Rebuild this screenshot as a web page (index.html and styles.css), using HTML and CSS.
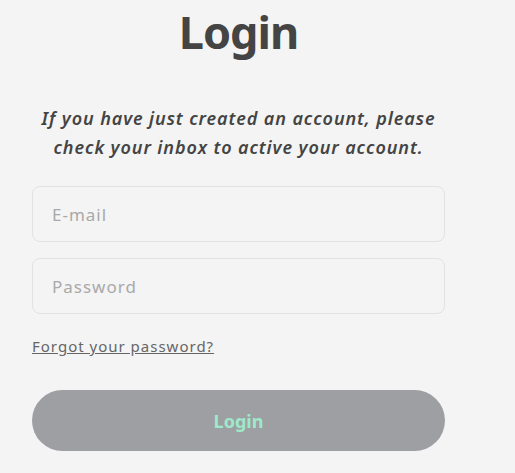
FILE: index.html
```html
<!DOCTYPE html>
<html lang="en">
<head>
    <meta charset="UTF-8">
    <meta name="viewport" content="width=device-width, initial-scale=1.0">
    <title>Login</title>
    <link rel="stylesheet" href="styles.css">
</head>
<body>
    <div class="login-box">
        <h1 class="title">Login</h1>
        <p class="notice">If you have just created an account, please check your inbox to active your account.</p>
        <form class="login-form">
            <input type="text" class="field" placeholder="E-mail">
            <input type="password" class="field" placeholder="Password">
            <a href="#" class="forgot">Forgot your password?</a>
            <button type="button" class="login-btn">Login</button>
        </form>
    </div>
</body>
</html>
```

FILE: styles.css
```css
body { margin: 0; background: #f4f4f4; font-family: "Noto Sans", sans-serif; color: #444; }
.login-box { width: 413px; margin-left: 32px; text-align: center; }
.title { margin: 0; padding-top: 4px; font-size: 45px; font-weight: bold; letter-spacing: -1px; color: #444; line-height: 56px; }
.notice { margin: 44px 0 24px; font-size: 18px; font-style: italic; font-weight: 600; letter-spacing: 0.9px;
          line-height: 29px; color: #444; }
.login-form { display: flex; flex-direction: column; align-items: stretch; text-align: left; }
.field { box-sizing: border-box; height: 56px; margin-bottom: 16px; padding: 0 19px; border: 1px solid #e2e2e2;
         border-radius: 8px; background: #f4f4f4; font-family: inherit; font-size: 17px; letter-spacing: 1px;
         color: #444; outline: none; }
.field::placeholder { color: #a9a9a9; }
.forgot { align-self: flex-start; margin-top: 6px; font-size: 15px; letter-spacing: 1px; color: #666; text-decoration: underline; }
.login-btn { height: 61px; margin-top: 34px; border: none; border-radius: 31px; background: #9e9fa3;
             color: #9de9c9; font-family: inherit; font-size: 18px; font-weight: bold; cursor: pointer; }
```
